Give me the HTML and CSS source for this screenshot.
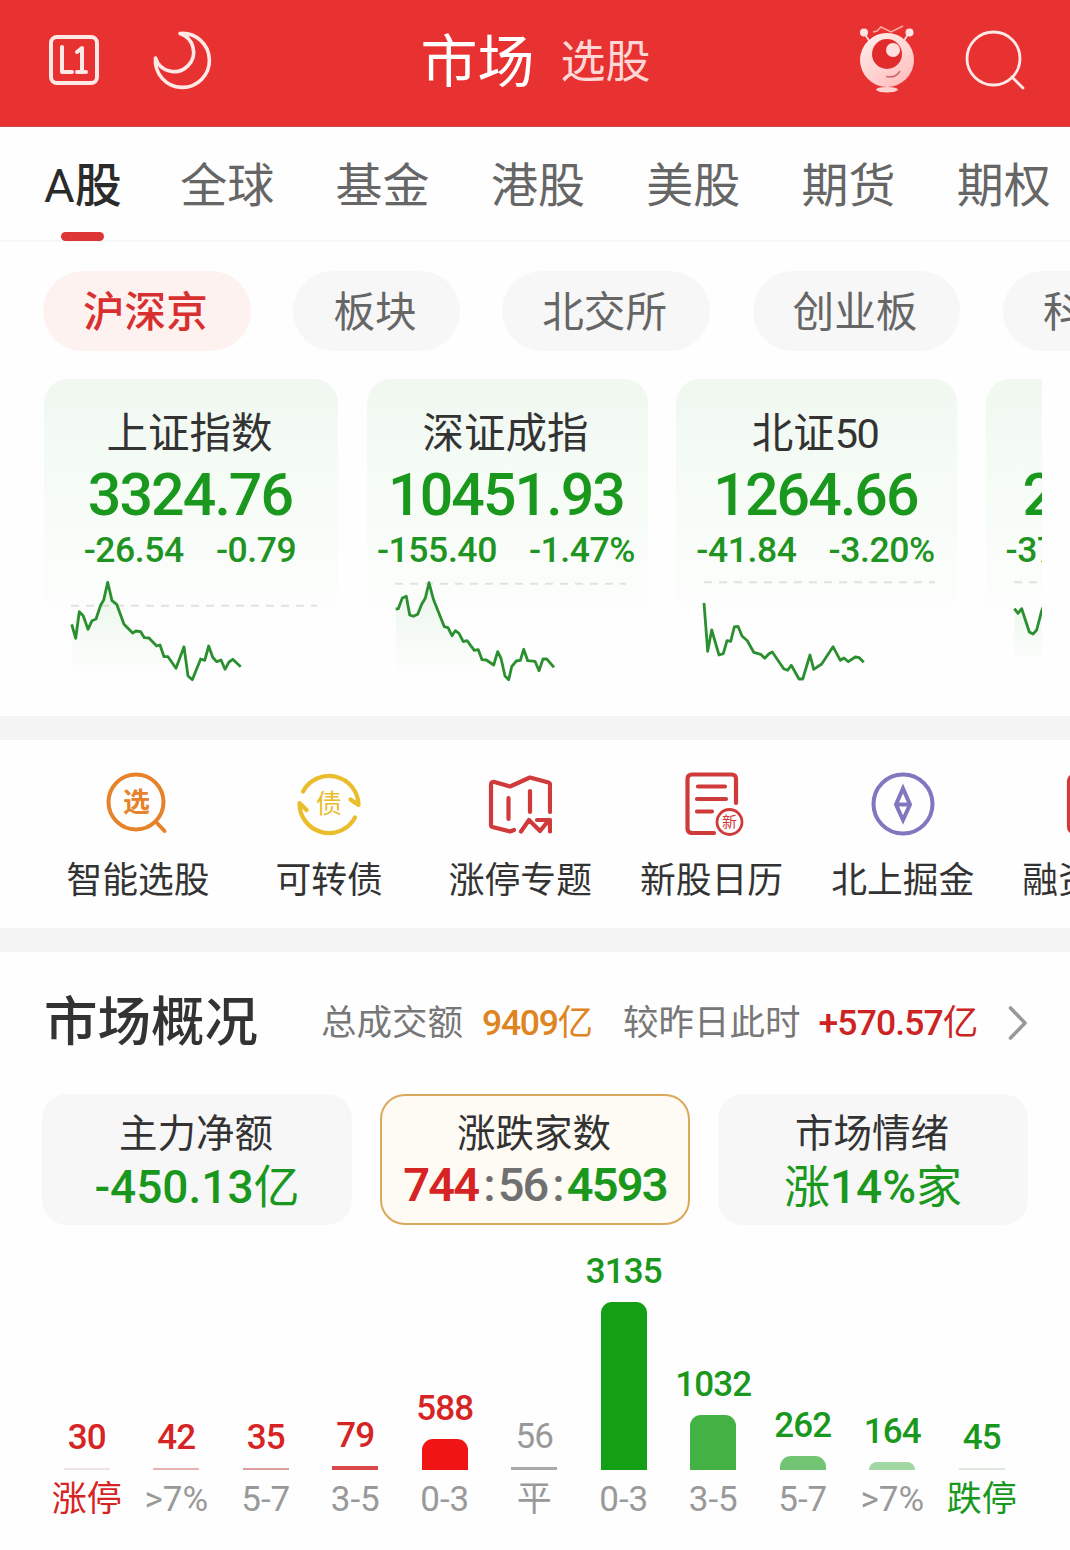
FILE: index.html
```html
<!DOCTYPE html>
<html lang="zh-CN">
<head>
    <meta charset="UTF-8">
    <title>市场</title>
    <link rel="stylesheet" href="styles.css">
</head>
<body>
    <div class="header">
        <div class="header-left">
            <svg width="52" height="52" viewBox="0 0 52 52" fill="none" stroke="#ffe9e7" stroke-width="4" stroke-linecap="round" stroke-linejoin="round">
                <rect x="3" y="3" width="46" height="46" rx="6"/>
                <path d="M14 13v25h10M29 18l5-4v24M29 38h9"/>
            </svg>
            <svg width="60" height="60" viewBox="0 0 60 60" fill="none" stroke="#ffe9e7" stroke-width="3.600" stroke-linecap="round" stroke-linejoin="round">
                <path d="M28 3.500A27 27 0 1 1 3.500 28A19.500 19.500 0 1 0 28 3.500Z"/>
            </svg>
        </div>
        <div class="header-title">
            <span class="current">市场</span>
            <span class="other">选股</span>
        </div>
        <div class="header-right">
            <svg width="58" height="70" viewBox="0 0 58 70" fill="none">
                <defs>
                    <linearGradient id="face" x1="0" y1="0" x2="0.600" y2="1">
                        <stop offset="0" stop-color="#fff1f0"/>
                        <stop offset="1" stop-color="#ffc2c0"/>
                    </linearGradient>
                </defs>
                <path d="M6 8l6 9M51 8l-6 9" stroke="#ffd9d7" stroke-width="1.800"/>
                <circle cx="6" cy="7.500" r="4" fill="#ffe5e3"/>
                <circle cx="51.500" cy="7.500" r="4" fill="#ffe5e3"/>
                <path d="M15 7l4-1 4-4 10 5 12-6" stroke="#ffaaa7" stroke-width="1.500"/>
                <circle cx="29" cy="35" r="27" fill="url(#face)"/>
                <circle cx="29" cy="29" r="15" fill="#e22c2b"/>
                <circle cx="35" cy="25" r="7" fill="#ffe0df"/>
                <path d="M28 51.500q10 2 14-5.500" stroke="#cf6b70" stroke-width="1.600"/>
                <path d="M18 65q0-3 11-3t11 3q-3 2.500-11 2.500t-11-2.500Z" fill="#ffd3d1"/>
            </svg>
            <svg width="62" height="62" viewBox="0 0 62 62" fill="none" stroke="#ffe9e7" stroke-width="2.800" stroke-linecap="round">
                <circle cx="29.500" cy="29.500" r="26.500"/>
                <path d="M48 48l11 11"/>
            </svg>
        </div>
    </div>

    <div class="tabs">
        <div class="tab active">A股</div>
        <div class="tab">全球</div>
        <div class="tab">基金</div>
        <div class="tab">港股</div>
        <div class="tab">美股</div>
        <div class="tab">期货</div>
        <div class="tab">期权</div>
    </div>

    <div class="pills">
        <div class="pill active">沪深京</div>
        <div class="pill">板块</div>
        <div class="pill">北交所</div>
        <div class="pill">创业板</div>
        <div class="pill">科创板</div>
    </div>

    <div class="indexes">
        <div class="index first">
            <div class="index-name">上证指数</div>
            <div class="index-value">3324.76</div>
            <div class="index-change"><span>-26.54</span><span>-0.79</span></div>
            <svg class="spark" width="294" height="115" viewBox="0 0 294 115">
                <defs>
                    <linearGradient id="fade" x1="0" y1="0" x2="0" y2="1">
                        <stop offset="0" stop-color="#20a020" stop-opacity="0.080"/>
                        <stop offset="1" stop-color="#20a020" stop-opacity="0"/>
                    </linearGradient>
                </defs>
                <path class="zero" d="M27 30.700H273"/>
                <path class="area" d="M27.700 49.300L35.300 36.700L44 54.300L52 44L63.700 7.300L72.700 29.300L80 49.300L105 63L132 93.300V105H27.700Z"/>
                <polyline class="line" points="27.7,49.3 31.7,63.3 35.3,36.7 39.3,41 44,54.3 48,45.7 52,44 56.7,30 59.7,25 63.7,7.3 68,25.7 72.7,29.3 80,49.3 88.7,58 92,56 96.7,56.7 100.3,62.7 105,63 112.7,71 116,70 120,81.7 124,81.7 132,93.3 140,71.7 144,101 148.3,104.7 156.7,84 160.7,85.3 164.7,71 168.7,82.3 172.7,86.7 177,85 181,94.3 185,87 188.7,84.3 196.7,91.7"/>
            </svg>
        </div>
        <div class="index">
            <div class="index-name">深证成指</div>
            <div class="index-value">10451.93</div>
            <div class="index-change"><span>-155.40</span><span>-1.47%</span></div>
            <svg class="spark" width="281" height="115" viewBox="0 0 281 115">
                <path class="zero" d="M28 8.700H259"/>
                <path class="area" d="M28.700 34L39.300 21.300L46.300 41.300L62 7.700L77.300 51.700L107.300 75.300L126.700 90V105H28.700Z"/>
                <polyline class="line" points="28.7,34 31.3,33.7 35.3,23 39.3,21.3 42.7,40 46.3,41.3 50.7,39.3 54.7,29.3 58.3,23.3 62,7.7 66.3,24 77.3,51.7 81,52.7 85,60.7 88.3,55.7 92,58.3 96.3,66.7 100,65.7 107.3,75.3 111.3,74.7 115,84.7 119.3,85 126.7,90 130.7,76.7 134,83.3 138,101 141.7,104.7 144.7,91.7 149.3,86 153.3,85.3 156.7,74.3 160.7,85.7 168,86.3 172,95.7 176,84 179.7,84 187,92.3"/>
            </svg>
        </div>
        <div class="index">
            <div class="index-name">北证<span class="tight">50</span></div>
            <div class="index-value">1264.66</div>
            <div class="index-change"><span>-41.84</span><span>-3.20%</span></div>
            <svg class="spark" width="281" height="115" viewBox="0 0 281 115">
                <path class="zero" d="M28 7.300H259"/>
                <polyline class="line" points="28,28 31.7,76.3 35.7,55 43,80 47.3,78.7 51,65.7 54.7,66.3 58.3,52 62,51.3 66,61 71.3,65.7 77.7,77.3 84.7,79.3 88.7,83.3 93,78.7 96.3,77 107.7,93.7 111.7,95.3 115.3,90.3 123,104 126.7,104 134,80 137.7,94.3 145.7,89 157,71.7 164.3,85.3 168,83 172.3,86.7 179.3,82 183.3,82.7 187.7,87.3"/>
            </svg>
        </div>
        <div class="index partial">
            <div class="index-name"></div>
            <div class="index-value">2</div>
            <div class="index-change"><span>-37</span></div>
            <svg class="spark" width="281" height="115" viewBox="0 0 281 115">
                <path class="zero" d="M28 7.300H259"/>
                <path class="area" d="M28.300 33.700L35.700 33.700L47 59L60 25V90H28.300Z"/>
                <polyline class="line" points="28.3,33.7 32,38.3 35.7,33.7 43.3,57 47,59 50.7,55 55.7,35.7 60,25"/>
            </svg>
        </div>
    </div>

    <div class="band"></div>

    <div class="features">
        <div class="feature">
            <svg width="64" height="64" viewBox="0 0 64 64" fill="none" stroke="#e5822a" stroke-width="4" stroke-linecap="round">
                <circle cx="30" cy="30" r="27.500"/>
                <path d="M50 50l8.500 9"/>
                <text class="glyph" x="30.500" y="40" font-size="27" font-weight="700" fill="#e5822a">选</text>
            </svg>
            <span>智能选股</span>
        </div>
        <div class="feature">
            <svg width="64" height="64" viewBox="0 0 64 64" fill="none" stroke="#eabd2c" stroke-width="4.200" stroke-linecap="round" stroke-linejoin="round">
                <path d="M6 19.500A29.500 29.500 0 0 1 61.500 33L53.500 27.500"/>
                <path d="M58 45.500A29.500 29.500 0 0 1 2.500 31L9.500 38"/>
                <text class="glyph" x="32" y="41" font-size="26" fill="#eabd2c">债</text>
            </svg>
            <span>可转债</span>
        </div>
        <div class="feature">
            <svg width="64" height="64" viewBox="0 0 64 64" fill="none" stroke="#cf3a3a" stroke-width="4.200" stroke-linecap="round" stroke-linejoin="round">
                <path d="M62 40V12.500Q62 11 60.500 10.500L42 5.500L22 14.500L6.500 10Q3 9.500 3 12.500V53Q3 54.500 4.500 55L22 59.500L26 58"/>
                <path d="M20.500 26v21M42 19v21"/>
                <path d="M33 59.500L41 48L52 59L61 48M49 48h13v11.500"/>
            </svg>
            <span>涨停专题</span>
        </div>
        <div class="feature">
            <svg width="64" height="64" viewBox="0 0 64 64" fill="none" stroke="#cf3a3a" stroke-width="4.200" stroke-linecap="round" stroke-linejoin="round">
                <path d="M56 31V7Q56 2.500 51.500 2.500H12Q7.500 2.500 7.500 7V56.500Q7.500 61 12 61H34"/>
                <path d="M18 14.500h27M17 27h29M17 39.500h15"/>
                <circle cx="49.500" cy="50" r="12.500" stroke-width="2.800"/>
                <text class="glyph" x="49.500" y="55" font-size="15" fill="#cf3a3a">新</text>
            </svg>
            <span>新股日历</span>
        </div>
        <div class="feature">
            <svg width="64" height="64" viewBox="0 0 64 64" fill="none" stroke="#8176bf" stroke-width="4">
                <circle cx="32" cy="32" r="29.500"/>
                <path d="M32 16.500L39 32.500L32 48L25 32.500ZM25 32.500h14"/>
            </svg>
            <span>北上掘金</span>
        </div>
        <div class="feature">
            <svg width="64" height="64" viewBox="0 0 64 64" fill="none" stroke="#cf3a3a" stroke-width="4.200">
                <rect x="7" y="4" width="50" height="56" rx="5"/>
            </svg>
            <span>融资融券</span>
        </div>
    </div>

    <div class="band"></div>

    <div class="overview">
        <div class="overview-head">
            <h2>市场概况</h2>
            <span class="turnover-label">总成交额</span>
            <span class="turnover">9409<small>亿</small></span>
            <span class="compare-label">较昨日此时</span>
            <span class="compare">+570.57<small>亿</small></span>
            <svg width="20" height="36" viewBox="0 0 20 36" fill="none" stroke="#999" stroke-width="3.600" stroke-linecap="round" stroke-linejoin="round">
                <path d="M2.500 3L17 18L2.500 33"/>
            </svg>
        </div>
        <div class="stats">
            <div class="stat">
                <div class="stat-name">主力净额</div>
                <div class="stat-value green">-450.13<small>亿</small></div>
            </div>
            <div class="stat selected">
                <div class="stat-name">涨跌家数</div>
                <div class="stat-value"><b class="red">744</b><i>:</i>56<i>:</i><b class="green">4593</b></div>
            </div>
            <div class="stat">
                <div class="stat-name">市场情绪</div>
                <div class="stat-value green"><small>涨</small>14%<small>家</small></div>
            </div>
        </div>
        <div class="chart">
            <div class="col red"><span class="count">30</span><div class="bar" style="height: 2px; background: #efe3e3"></div><span class="range">涨停</span></div>
            <div class="col red"><span class="count">42</span><div class="bar" style="height: 2px; background: #e6b3b5"></div><span class="range muted">&gt;7%</span></div>
            <div class="col red"><span class="count">35</span><div class="bar" style="height: 2px; background: #dda0a2"></div><span class="range muted">5-7</span></div>
            <div class="col red"><span class="count">79</span><div class="bar" style="height: 4px; background: #d8484a"></div><span class="range muted">3-5</span></div>
            <div class="col red"><span class="count">588</span><div class="bar round" style="height: 31px; background: #f01414"></div><span class="range muted">0-3</span></div>
            <div class="col muted"><span class="count thin">56</span><div class="bar" style="height: 3px; background: #aaa"></div><span class="range muted">平</span></div>
            <div class="col green"><span class="count">3135</span><div class="bar round" style="height: 168px; background: #14a014"></div><span class="range muted">0-3</span></div>
            <div class="col green"><span class="count">1032</span><div class="bar round" style="height: 55px; background: #43b143"></div><span class="range muted">3-5</span></div>
            <div class="col green"><span class="count">262</span><div class="bar round" style="height: 14px; background: #72c472"></div><span class="range muted">5-7</span></div>
            <div class="col green"><span class="count">164</span><div class="bar round" style="height: 8px; background: #a1d7a3"></div><span class="range muted">&gt;7%</span></div>
            <div class="col green"><span class="count">45</span><div class="bar" style="height: 2px; background: #dfe8df"></div><span class="range">跌停</span></div>
        </div>
    </div>
</body>
</html>
```

FILE: styles.css
```css
* {
    margin: 0;
    padding: 0;
    box-sizing: border-box;
}
body {
    width: 1070px;
    height: 1550px;
    overflow: hidden;
    background: #fefefe;
    color: #333;
    font-family: Roboto, "Noto Sans CJK SC", sans-serif;
    white-space: nowrap;
}
svg {
    display: block;
    flex: none;
}
small {
    font-size: inherit;
    font-weight: 400;
    letter-spacing: 0;
}
.red {
    color: #d62424;
}
.green {
    color: #1a981d;
}
.muted {
    color: #999;
}

/* header */
.header {
    display: grid;
    grid-template-columns: 1fr auto 1fr;
    align-items: center;
    height: 127px;
    padding: 0 44px 7px 48px;
    background: #e83131;
    border-bottom: 1px solid #c94a4a;
}
.header-left,
.header-right,
.header-title {
    display: flex;
    align-items: center;
}
.header-left {
    gap: 52px;
}
.header-right {
    justify-content: flex-end;
    gap: 48px;
}
.header-title {
    gap: 26px;
    padding: 7px 3px 0 0;
    line-height: 80px;
}
.header-title .current {
    font-size: 57px;
    color: #fff;
}
.header-title .other {
    font-size: 45px;
    color: #ffd8d6;
}

/* market tabs */
.tabs {
    display: flex;
    gap: 61.300px;
    height: 115px;
    padding-left: 44px;
    border-bottom: 2px solid #f6f6f6;
}
.tab {
    flex: none;
    font-size: 47px;
    line-height: 117px;
    color: #666;
}
.tab.active {
    position: relative;
    width: 75px;
    color: #2b2b2b;
    font-weight: 500;
}
.tab.active::first-letter {
    font-weight: 400;
}
.tab.active::after {
    content: "";
    position: absolute;
    left: 17px;
    bottom: -1px;
    width: 43px;
    height: 9px;
    border-radius: 5px;
    background: #dd3535;
}

.pills {
    display: flex;
    gap: 42.600px;
    padding: 29px 0 0 43px;
    overflow: hidden;
}
.pill {
    flex: none;
    height: 80px;
    padding: 0 43px 0 40px;
    border-radius: 40px;
    background: #f7f7f7;
    font-size: 41.600px;
    line-height: 84px;
    color: #666;
}
.pill.active {
    background: #fef2f1;
    color: #d83030;
    font-weight: 500;
}

/* index cards */
.indexes {
    display: flex;
    gap: 28.500px;
    width: 998px;
    height: 365px;
    margin-left: 44px;
    padding-top: 28px;
    overflow: hidden;
}
.index {
    flex: none;
    width: 281px;
    height: 311px;
    padding-top: 22px;
    border-radius: 24px;
    background: linear-gradient(#f0f8f0, #f7fcf7 40%, #fefefe 85%);
    text-align: center;
    color: #1f9422;
}
.index.first {
    width: 294px;
}
.index-name {
    height: 60px;
    padding-right: 3px;
    line-height: 65px;
    font-size: 41.500px;
    color: #333;
}
.tight {
    letter-spacing: -1.500px;
}
.index-value {
    height: 64px;
    padding-right: 2px;
    line-height: 67px;
    font-size: 59px;
    font-weight: 500;
    letter-spacing: -1.900px;
    color: #1a981d;
}
.index-change {
    display: flex;
    justify-content: center;
    gap: 32px;
    height: 50px;
    padding-right: 2px;
    line-height: 50px;
    font-size: 35.500px;
    font-weight: 500;
    letter-spacing: -0.400px;
}
.index.partial {
    text-align: left;
}
.partial .index-value {
    padding-left: 37px;
}
.partial .index-change {
    justify-content: flex-start;
    padding-left: 20px;
}
.spark .zero {
    fill: none;
    stroke: #dfe3df;
    stroke-width: 2;
    stroke-dasharray: 8 7;
}
.spark .area {
    fill: url(#fade);
}
.spark .line {
    fill: none;
    stroke: #2a8f2e;
    stroke-width: 2.800;
    stroke-linejoin: round;
}

.band {
    height: 24px;
    background: #f4f4f4;
}

/* shortcuts */
.features {
    display: flex;
    height: 188px;
    padding: 32px 0 0 42.400px;
    overflow: hidden;
}
.feature {
    display: flex;
    flex: none;
    flex-direction: column;
    align-items: center;
    width: 191.200px;
}
.feature span {
    margin-top: 18px;
    font-size: 35.800px;
    line-height: 54px;
}
.glyph {
    stroke: none;
    text-anchor: middle;
    font-family: "Noto Sans CJK SC", sans-serif;
}

/* market overview */
.overview-head {
    display: flex;
    align-items: center;
    height: 142px;
    padding-left: 44px;
    font-size: 35.500px;
    line-height: 54px;
}
.overview-head h2 {
    width: 277px;
    font-size: 53.500px;
    font-weight: 500;
}
.turnover-label,
.compare-label {
    color: #777;
}
.turnover {
    margin: 0 30px 0 19px;
    font-weight: 500;
    letter-spacing: -1.300px;
    color: #de8420;
}
.compare {
    margin: 0 30px 0 18px;
    font-weight: 500;
    letter-spacing: -0.900px;
    color: #cc2424;
}
.stats {
    display: grid;
    grid-template-columns: repeat(3, 1fr);
    gap: 28px;
    padding: 0 42px;
}
.stat {
    height: 131px;
    padding-top: 11px;
    border-radius: 25px;
    background: #f7f7f7;
    text-align: center;
}
.stat.selected {
    padding-top: 9px;
    border: 2px solid #dba95c;
    background: #fefaf4;
}
.stat-name {
    padding-right: 2px;
    line-height: 57px;
    font-size: 38.500px;
}
.stat-value {
    line-height: 51px;
    font-size: 46px;
    font-weight: 500;
}
.selected .stat-value {
    line-height: 45px;
    font-size: 47px;
    letter-spacing: -1.900px;
    color: #707070;
}
.stat-value b {
    font-weight: 600;
}
.stat-value i {
    margin: 0 4px 0 5px;
    font-style: normal;
}

.chart {
    display: flex;
    align-items: flex-end;
    height: 295px;
    padding-left: 42px;
}
.col {
    display: flex;
    flex-direction: column;
    align-items: center;
    width: 89.500px;
}
.count {
    height: 49px;
    line-height: 38px;
    font-size: 35px;
    font-weight: 500;
    letter-spacing: -0.900px;
}
.count.thin {
    font-weight: 400;
}
.bar {
    width: 46px;
}
.bar.round {
    border-radius: 11px 11px 0 0;
}
.range {
    height: 50px;
    line-height: 59px;
    font-size: 35px;
}
```
